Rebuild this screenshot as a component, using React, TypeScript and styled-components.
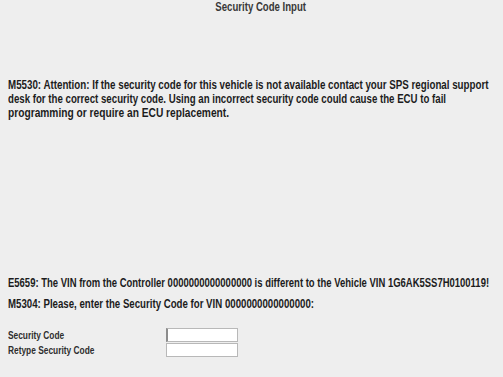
import React from "react";
import styled, { createGlobalStyle } from "styled-components";

const Global = createGlobalStyle`
  html, body { margin: 0; padding: 0; background: #eeeeee; }
  body { font-family: "Liberation Sans", Arial, sans-serif; }
`;

const Page = styled.div`
  width: 503px;
  height: 377px;
  background: #eeeeee;
  display: flex;
  flex-direction: column;
  color: #1c1c1c;
  font-weight: bold;
  font-size: 12px;
  overflow: hidden;
`;

const Title = styled.div`
  text-align: center;
  color: #383838;
  font-size: 12px;
  height: 14px;
  line-height: 14px;
  padding-left: 19px;
`;

/* condensed face (Arial Narrow look) rendered from Liberation Sans */
const Narrow = styled.span<{ $scale: number; $origin?: string }>`
  display: inline-block;
  white-space: nowrap;
  transform: scaleX(${(p) => p.$scale});
  transform-origin: ${(p) => p.$origin ?? "left"} center;
`;

const Message = styled.div<{ $top: number }>`
  margin: ${(p) => p.$top}px 0 0 8px;
  line-height: 14px;
  display: flex;
  flex-direction: column;
  align-items: flex-start;
`;

const Form = styled.div`
  margin: 17px 0 0 8px;
  display: grid;
  grid-template-columns: 158px 72px;
  grid-auto-rows: 14px;
  row-gap: 1px;
  align-items: center;
`;

const Label = styled.label`
  font-size: 11px;
  line-height: 14px;
  color: #2e2e2e;
`;

const Input = styled.input<{ $focused?: boolean }>`
  box-sizing: border-box;
  width: 72px;
  height: 14px;
  border: 1px solid #b8b8b8;
  border-left: ${(p) => (p.$focused ? "2px solid #8c8c8c" : "1px solid #b8b8b8")};
  background: #fff;
  padding: 0;
  margin: 0;
  outline: none;
`;

export default function App() {
  return (
    <Page>
      <Global />
      <Title>
        <Narrow $scale={0.8} $origin="center">Security Code Input</Narrow>
      </Title>
      <Message $top={64}>
        <Narrow $scale={0.813}>
          M5530: Attention: If the security code for this vehicle is not available contact your SPS regional support
        </Narrow>
        <Narrow $scale={0.806}>
          desk for the correct security code. Using an incorrect security code could cause the ECU to fail
        </Narrow>
        <Narrow $scale={0.85}>programming or require an ECU replacement.</Narrow>
      </Message>
      <Message $top={156}>
        <Narrow $scale={0.79}>
          E5659: The VIN from the Controller 0000000000000000 is different to the Vehicle VIN 1G6AK5SS7H0100119!
        </Narrow>
      </Message>
      <Message $top={7}>
        <Narrow $scale={0.805}>M5304: Please, enter the Security Code for VIN 0000000000000000:</Narrow>
      </Message>
      <Form>
        <Label>
          <Narrow $scale={0.76}>Security Code</Narrow>
        </Label>
        <Input $focused />
        <Label>
          <Narrow $scale={0.76}>Retype Security Code</Narrow>
        </Label>
        <Input />
      </Form>
    </Page>
  );
}
